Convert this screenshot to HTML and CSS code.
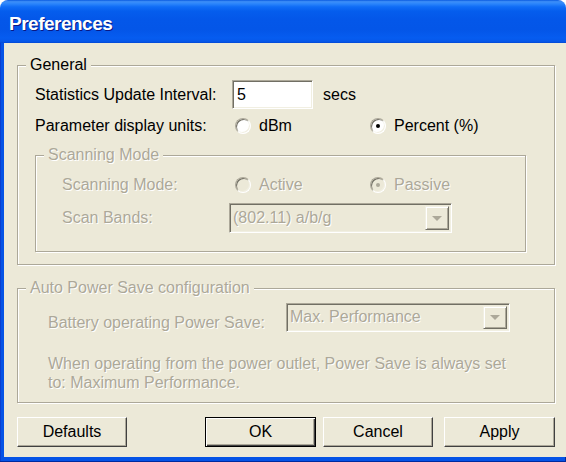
FILE: index.html
```html
<!DOCTYPE html>
<html lang="en">
<head>
    <meta charset="UTF-8">
    <title>Preferences</title>
    <link rel="stylesheet" href="styles.css">
</head>
<body>
    <div class="window">
        <div class="titlebar"><span class="title">Preferences</span></div>
        <div class="frame">
            <div class="client">

                <fieldset class="group general">
                    <legend>General</legend>
                    <div class="general-body">
                        <div class="row row-interval">
                            <span class="label label-main">Statistics Update Interval:</span>
                            <div class="textbox">5</div>
                            <span class="unit">secs</span>
                        </div>
                        <div class="row row-units">
                            <span class="label label-units">Parameter display units:</span>
                            <span class="option"><span class="radio"></span>dBm</span>
                            <span class="option"><span class="radio checked"></span>Percent (%)</span>
                        </div>

                        <fieldset class="group scanning disabled">
                            <legend>Scanning Mode</legend>
                            <div class="scanning-body">
                                <div class="row row-mode">
                                    <span class="label label-mode">Scanning Mode:</span>
                                    <span class="option"><span class="radio"></span>Active</span>
                                    <span class="option"><span class="radio checked"></span>Passive</span>
                                </div>
                                <div class="row row-bands">
                                    <span class="label label-bands">Scan Bands:</span>
                                    <div class="combo combo-bands">
                                        <span class="combo-text">(802.11) a/b/g</span>
                                        <span class="combo-btn"><span class="arrow"></span></span>
                                    </div>
                                </div>
                            </div>
                        </fieldset>
                    </div>
                </fieldset>

                <fieldset class="group power disabled">
                    <legend>Auto Power Save configuration</legend>
                    <div class="power-body">
                        <div class="row row-battery">
                            <span class="label label-battery">Battery operating Power Save:</span>
                            <div class="combo combo-battery">
                                <span class="combo-text">Max. Performance</span>
                                <span class="combo-btn"><span class="arrow"></span></span>
                            </div>
                        </div>
                        <p class="note">When operating from the power outlet, Power Save is always set<br>to: Maximum Performance.</p>
                    </div>
                </fieldset>

                <div class="buttons">
                    <button class="btn btn-defaults">Defaults</button>
                    <button class="btn btn-ok default">OK</button>
                    <button class="btn btn-cancel">Cancel</button>
                    <button class="btn btn-apply">Apply</button>
                </div>

            </div>
        </div>
    </div>
</body>
</html>
```

FILE: styles.css
```css
* {
    box-sizing: border-box;
}
body {
    margin: 0;
    background: #fff;
    font-family: "Liberation Sans", Arial, sans-serif;
    font-size: 16px;
    color: #000;
}
.window {
    width: 566px;
    height: 462px;
    display: flex;
    flex-direction: column;
}
.titlebar {
    height: 43px;
    border-radius: 8px 8px 0 0;
    background: linear-gradient(to bottom, #0a5ae0 0%, #3d8ff8 4%, #2a84fb 9%, #0f6cf6 16%, #055ded 26%, #0457e9 45%, #0456e8 70%, #065cf0 88%, #0658ea 96%, #0348d4 100%);
    display: flex;
    align-items: center;
    padding: 4px 0 0 9px;
}
.title {
    color: #fff;
    font-weight: bold;
    font-size: 19px;
    letter-spacing: -0.5px;
    text-shadow: 1px 1px 0 #0a1883;
}
.frame {
    flex: 1;
    display: flex;
    background: #0553e6;
    padding: 0 4px 5px 4px;
    box-shadow: inset -1px -1px 0 #002a9e, inset 1px 0 0 #0a3ed0;
}
.client {
    flex: 1;
    background: #ece9d8;
    padding: 13px 11px 0 13px;
}

/* group boxes */
.group {
    margin: 0;
    padding: 0;
    min-width: 0;
    border: 1px solid #aca899;
    box-shadow: 1px 1px 0 #fff, inset 1px 1px 0 #fff;
}
.group legend {
    margin-left: 8px;
    padding: 0 4px;
    line-height: 18px;
    background: #ece9d8;
}
.disabled,
.disabled legend {
    color: #aca899;
    text-shadow: 1px 1px 0 #fff;
}
.general-body {
    padding: 6px 0 12px 17px;
}
.scanning {
    width: 491px;
    margin-top: 10px;
}
.scanning-body {
    padding: 11px 0 18px 26px;
}
.power {
    margin-top: 14px;
}
.power-body {
    padding: 5px 0 10px 30px;
}

/* rows */
.row {
    display: flex;
    align-items: center;
}
.label {
    flex: none;
    white-space: nowrap;
}
.row-interval {
    height: 29px;
}
.label-main {
    width: 197px;
}
.unit {
    margin-left: 10px;
}
.row-units {
    height: 20px;
    margin-top: 7px;
}
.label-units {
    width: 200px;
}
.option {
    display: flex;
    align-items: center;
    gap: 8px;
    width: 135px;
    white-space: nowrap;
}
.row-mode {
    height: 20px;
}
.label-mode {
    width: 173px;
}
.row-bands {
    margin-top: 8px;
}
.label-bands {
    width: 167px;
}
.label-battery {
    width: 238px;
    margin-top: 12px;
}

/* controls */
.textbox {
    width: 81px;
    height: 29px;
    background: #fff;
    border: 1px solid;
    border-color: #aca899 #fff #fff #aca899;
    box-shadow: inset 1px 1px 0 #716f64, inset -1px -1px 0 #f1efe2;
    padding: 4px 0 0 4px;
    line-height: 20px;
}
.radio {
    flex: none;
    position: relative;
    width: 16px;
    height: 16px;
    border-radius: 50%;
    background: #fff;
    border: 1px solid;
    border-color: #aca899 #fff #fff #aca899;
    box-shadow: inset 1px 1px 0 #716f64, inset -1px -1px 0 #f1efe2;
}
.radio.checked::after {
    content: "";
    position: absolute;
    left: 5px;
    top: 5px;
    width: 4px;
    height: 4px;
    border-radius: 50%;
    background: #000;
}
.disabled .radio {
    background: #ece9d8;
}
.disabled .radio.checked::after {
    background: #aca899;
}
.combo {
    display: flex;
    align-items: center;
    justify-content: space-between;
    background: #ece9d8;
    border: 1px solid;
    border-color: #aca899 #fff #fff #aca899;
    box-shadow: inset 1px 1px 0 #716f64, inset -1px -1px 0 #f1efe2;
    padding: 2px 2px 2px 3px;
}
.combo-bands {
    width: 223px;
    height: 30px;
}
.combo-battery {
    width: 224px;
    height: 29px;
}
.combo-btn {
    width: 24px;
    height: 100%;
    display: flex;
    align-items: center;
    justify-content: center;
    border: 1px solid;
    border-color: #f1efe2 #716f64 #716f64 #f1efe2;
    box-shadow: inset 1px 1px 0 #fff, inset -1px -1px 0 #aca899;
}
.arrow {
    width: 0;
    height: 0;
    border-left: 5px solid transparent;
    border-right: 5px solid transparent;
    border-top: 5px solid #aca899;
}
.note {
    margin: 22px 0 0 0;
    line-height: 19px;
}

/* buttons */
.buttons {
    display: flex;
    margin-top: 14px;
}
.btn {
    height: 30px;
    font-family: "Liberation Sans", Arial, sans-serif;
    font-size: 16px;
    color: #000;
    background: #ece9d8;
    padding: 0;
    border: 1px solid;
    border-color: #fff #404040 #404040 #fff;
    box-shadow: inset -1px -1px 0 #aca899;
}
.btn.default {
    border-color: #000;
    box-shadow: inset 1px 1px 0 #fff, inset -1px -1px 0 #404040, inset -2px -2px 0 #aca899;
}
.btn-defaults {
    width: 110px;
}
.btn-ok {
    width: 111px;
    margin-left: 78px;
}
.btn-cancel {
    width: 110px;
    margin-left: 7px;
}
.btn-apply {
    width: 111px;
    margin-left: 11px;
}
```
